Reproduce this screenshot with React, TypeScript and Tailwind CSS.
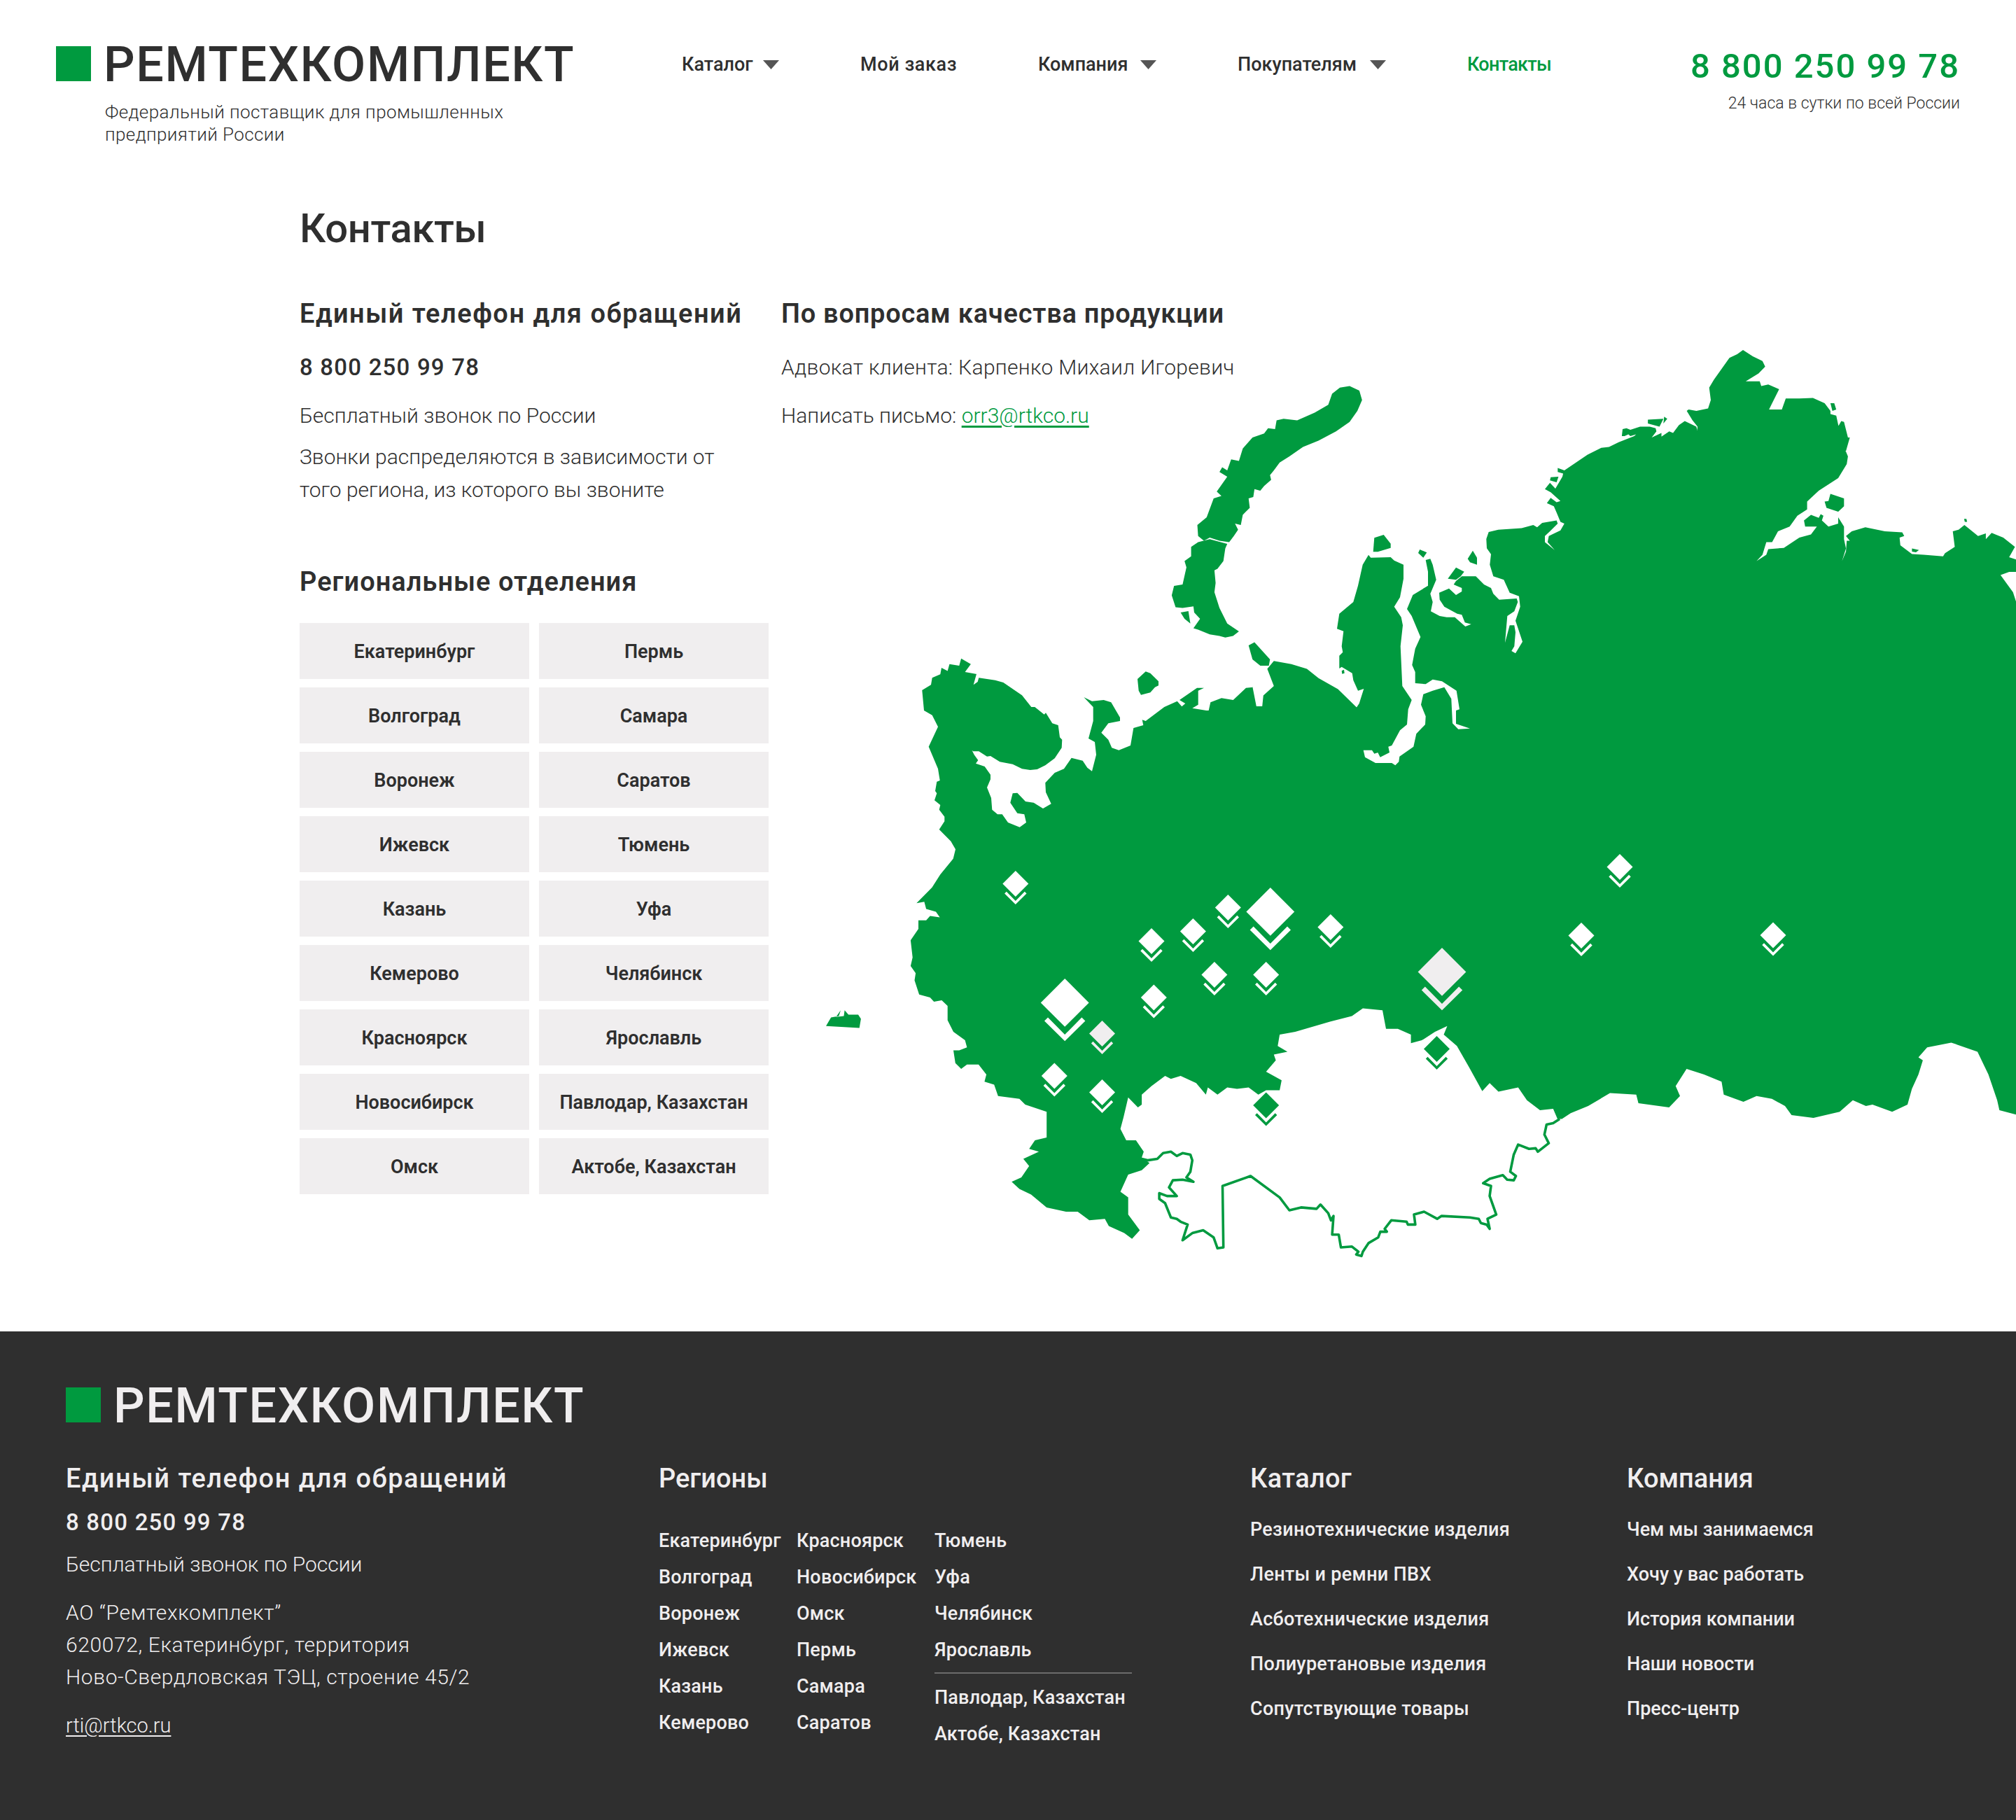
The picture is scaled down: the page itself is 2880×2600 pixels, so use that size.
const GREEN = "#009a3f"

// координаты контура снимались с разных кропов, каждый со своим масштабом
type Pt = [number, number]
const crop = (ox: number, oy: number, sx: number, sy: number) => (pts: number[]): Pt[] => {
  const out: Pt[] = []
  for (let i = 0; i < pts.length; i += 2) out.push([ox + pts[i] / sx, oy + pts[i + 1] / sy])
  return out
}
const z3 = crop(1140, 480, 1.802, 2.24)
const z4 = crop(2010, 480, 1.802, 2.24)
const z5 = crop(1140, 1180, 1.802, 2.45)
const z6 = crop(1900, 1180, 1.6, 2.45)
const z9 = crop(1900, 760, 3, 3)
const z10 = crop(1290, 950, 3, 3)

const line = (pts: Pt[]) => "M" + pts.map(([x, y]) => `${x.toFixed(1)} ${y.toFixed(1)}`).join("L")
const shape = (pts: Pt[]) => line(pts) + "Z"

const mainland = shape([
  ...z10([82,108, 120,85, 125,55, 160,40, 165,12]),
  ...z3([385,1072, 390,1050, 415,1055, 420,1032, 445,1050, 430,1075, 460,1082]),
  ...z10([315,38, 302,85, 320,72, 325,55, 395,65, 430,75, 510,130, 550,180, 565,180, 605,212, 612,205, 640,250, 665,258, 672,310, 682,320, 680,355, 650,400, 610,430, 575,447, 545,450, 510,445, 470,425, 415,415, 375,390, 360,392, 325,370, 300,370, 265,330, 245,325, 285,332, 290,355, 305,385, 322,408, 312,422, 350,435, 375,470, 375,490, 360,525, 378,570, 382,620, 405,640, 425,640, 450,675, 500,695, 528,675, 520,640, 490,635, 460,590, 470,550, 490,548, 525,585, 560,590, 600,615, 635,595, 612,545, 610,505, 650,462, 690,445, 722,398, 770,410, 790,440, 810,455, 828,385, 822,330, 795,315, 815,240, 815,180, 775,138, 810,155, 860,150, 892,160, 930,225, 930,240, 880,250, 850,290, 880,320, 895,355, 925,365, 975,345, 988,270, 1030,258, 1025,235, 1040,240, 1120,180, 1175,155, 1195,178, 1210,165, 1185,150, 1260,98, 1290,98, 1265,110, 1265,150, 1265,170, 1240,185, 1300,195, 1310,195, 1318,160, 1365,142, 1415,150, 1470,98, 1500,95]),
  ...z3([1170,1122, 1180,1185, 1195,1185, 1198,1150, 1225,1120, 1208,1065, 1225,1040, 1270,1050, 1310,1065, 1340,1095, 1390,1130, 1438,1188]),
  ...z9([125,735, 145,672, 120,680, 100,635, 95,605, 50,578, 40,585, 40,530, 55,515, 50,490, 58,425, 30,415, 40,350, 100,300, 120,230, 140,140, 165,98, 175,110, 260,108, 275,122, 315,140, 315,200, 300,280, 275,320, 305,365, 312,400, 302,490, 310,660, 350,720, 335,760, 330,825, 300,850, 265,915, 250,920, 255,945, 215,965, 205,945, 215,942, 190,950, 180,935, 143,935, 150,965, 195,990, 265,990, 280,1000, 295,985, 298,962, 358,920, 370,865, 408,825, 410,790, 390,740, 400,695, 440,680, 490,665, 520,715, 525,820, 550,845, 600,842, 540,822, 540,765, 555,760, 542,680, 480,640, 440,632, 410,652, 365,648, 365,600, 352,570, 365,500, 388,450, 350,360, 330,330, 355,270, 420,230, 420,170, 410,120, 430,115, 440,140, 455,205, 430,265, 440,300, 432,340, 470,360, 500,365, 535,365, 580,405, 605,395, 578,388, 565,355, 545,350, 490,320, 470,290, 468,260, 510,242, 540,270, 565,255, 565,240, 545,232, 530,225, 540,210, 565,190, 625,190, 660,225, 690,240, 700,265, 725,290, 800,285, 805,300, 790,340, 760,360, 750,475, 770,400, 790,400, 795,430, 790,490, 778,510, 795,520, 825,470, 795,380, 815,320, 810,275, 770,260, 745,205, 700,190, 685,140, 690,95, 672,70, 670,30, 680,0]),
  ...z4([235,620, 295,615, 325,605, 335,612, 348,598, 385,590, 388,600, 368,625, 355,640, 355,660, 380,685, 362,660, 365,640, 395,622, 405,600, 395,595, 385,565, 378,545, 360,535, 370,518, 385,532, 395,528, 370,500, 355,490, 368,470, 382,488, 400,450, 402,440, 388,435, 388,422, 405,430, 435,405, 465,380, 500,358, 520,355, 545,340, 585,320, 590,315, 575,320, 570,315, 560,320, 553,320, 555,298, 565,295, 575,300, 600,290, 625,290, 640,295, 642,305, 630,325, 655,310, 655,322, 675,305, 685,310, 700,285, 715,272, 745,290, 750,320, 738,338, 745,320, 748,290, 735,270, 720,240, 725,235, 745,240, 775,232, 782,205, 778,165, 790,140, 830,70, 850,58, 865,45, 890,65, 915,80, 922,98, 905,120, 872,145, 908,145, 912,160, 930,155, 958,170, 940,215, 932,235, 965,235, 975,200, 1010,200, 1045,198, 1075,215, 1090,240, 1090,250, 1105,255, 1112,295, 1105,300, 1118,272, 1125,275, 1135,325, 1140,325, 1130,368, 1118,365, 1115,370, 1100,330, 1130,370, 1135,385, 1132,410, 1110,455, 1085,475, 1060,495, 1030,530, 1030,555, 1005,575, 985,610, 955,625, 940,660, 925,660, 915,700, 900,720, 925,700, 930,682, 970,678, 1010,645, 1040,635, 1055,610, 1025,610, 1022,590, 1040,572, 1060,582, 1065,570, 1072,575, 1068,590, 1085,610, 1110,600, 1110,580, 1125,610, 1125,650, 1130,680, 1120,720, 1135,740, 1120,720, 1130,690, 1132,655, 1140,655, 1130,640, 1145,625, 1180,612, 1230,625, 1275,628, 1280,640, 1268,645, 1270,670, 1300,698, 1330,700, 1380,705, 1385,695, 1410,675, 1405,625, 1420,620, 1435,605, 1470,640, 1490,632, 1490,650, 1505,630, 1535,645, 1565,675, 1550,708, 1568,715, 1568,755, 1550,755, 1528,765, 1560,820, 1568,850, 1568,1568]),
  ...z6([1568,1010, 1530,995, 1525,960, 1505,870, 1480,790, 1420,758, 1365,775, 1345,810, 1355,820, 1345,870, 1330,920, 1320,975, 1285,1000, 1240,975, 1225,980, 1195,960, 1165,1000, 1105,1022, 1055,1012, 1040,980, 1010,955, 975,945, 945,965, 900,940, 895,895, 855,870, 815,850, 790,910, 800,945, 775,985, 705,970, 700,940, 640,935, 590,980, 550,1005, 530,1025, 520,1025, 510,990, 480,995, 450,960, 430,915, 385,930, 365,900, 348,928, 320,850, 290,770, 260,730, 268,700, 240,720, 210,750, 185,760, 185,730, 155,710, 128,710, 120,645, 75,638, 50,665, 0,685]),
  ...z5([1280,720, 1240,730, 1235,770, 1260,790, 1225,800, 1230,820, 1205,860, 1245,890, 1240,925, 1205,925, 1185,940, 1160,915, 1130,920, 1105,915, 1080,940, 1055,915, 1050,940, 1025,900, 985,875, 960,885, 945,875, 910,910, 885,940, 885,975, 875,985, 850,950, 838,1020, 830,1060, 845,1100, 870,1100, 890,1140, 885,1160, 905,1180, 885,1205, 850,1220, 830,1280, 850,1300, 850,1360, 880,1415, 860,1445, 840,1425, 800,1400, 790,1375, 750,1380, 720,1350, 690,1350, 640,1335, 600,1290, 570,1270, 550,1245, 575,1230, 595,1190, 580,1165, 620,1140, 595,1130, 610,1100, 640,1090, 640,1030, 640,1000, 585,975, 570,955, 515,945, 505,905, 480,895, 485,870, 465,835, 435,835, 420,850, 405,830, 400,785, 415,785, 435,775, 430,750, 400,720, 385,680, 385,630, 370,610, 350,615, 340,600, 312,590, 300,540, 303,515, 290,490, 295,460, 290,400, 310,360, 310,330, 330,330, 340,315, 365,320, 355,300, 330,290, 325,265, 305,270, 345,215]),
  ...z10([160,898, 215,830, 225,790, 205,755, 155,705, 178,670, 178,650, 155,620, 160,600, 135,580, 145,550, 138,540, 145,500, 158,495, 150,445, 110,350, 150,265, 125,215, 90,195]),
])

const islands = [
  z3([1420,160, 1445,175, 1452,205, 1440,240, 1420,275, 1385,305, 1340,335, 1300,355, 1265,385, 1240,405, 1225,430, 1215,445, 1218,460, 1200,480, 1190,495, 1175,490, 1172,515, 1160,520, 1163,550, 1145,572, 1140,605, 1125,600, 1133,620, 1122,640, 1110,660, 1085,655, 1060,645, 1045,655, 1030,640, 1028,605, 1052,580, 1070,520, 1090,512, 1078,498, 1105,450, 1085,435, 1092,420, 1105,430, 1115,395, 1135,400, 1145,360, 1170,325, 1200,312, 1210,295, 1228,298, 1232,270, 1250,265, 1285,270, 1330,245, 1365,220, 1375,185, 1395,165]),
  z3([1060,650, 1105,665, 1100,680, 1095,720, 1080,745, 1072,750, 1075,790, 1072,820, 1085,870, 1105,920, 1135,945, 1120,960, 1100,965, 1085,960, 1060,955, 1030,940, 1018,935, 1035,905, 1020,885, 1018,865, 990,870, 972,868, 962,830, 968,800, 990,795, 1000,740, 995,720, 1012,705, 1012,675, 1030,660]),
  z3([985,885, 1005,880, 1010,920, 995,905]),
  z3([1160,990, 1175,980, 1215,1035, 1212,1055, 1190,1055, 1170,1035]),
  z10([1005,60, 1040,28, 1060,35, 1095,70, 1095,88, 1080,95, 1060,118, 1020,128, 1010,110]),
  z9([185,85, 190,25, 230,12, 260,50, 260,68, 205,85]),
  z9([378,90, 385,75, 415,88, 400,110]),
  z9([590,115, 612,80, 630,110, 630,140, 600,130]),
  z9([505,200, 540,152, 575,170, 560,190, 540,205]),
  z9([50,595, 60,590, 62,605, 52,608]),
  z4([1090,505, 1125,520, 1125,545, 1110,562, 1080,550, 1075,530, 1085,528]),
  z4([1300,680, 1318,685, 1310,692, 1300,690]),
  z4([620,268, 660,265, 650,290, 620,280]),
  z4([662,258, 670,265, 660,280]),
  z4([1090,215, 1100,215, 1105,235, 1095,240]),
  z4([370,452, 390,450, 385,468, 368,462]),
  z4([1434,585, 1440,585, 1442,595, 1436,595]),
  z5([72,700, 85,670, 105,665, 110,645, 98,668, 118,665, 120,645, 130,660, 155,660, 162,675, 158,707]),
]

const border = line([
  ...z5([885,1165, 900,1170, 925,1165, 940,1145, 960,1140, 975,1155, 990,1145, 1010,1150, 1015,1170, 1010,1210, 1000,1230, 1018,1245, 990,1238, 965,1240, 955,1265, 975,1295, 950,1295, 930,1285, 930,1305, 945,1320, 960,1370, 975,1375, 985,1385, 1003,1395, 990,1450, 1015,1425, 1043,1415, 1070,1440, 1080,1478, 1095,1475, 1093,1260, 1165,1225, 1240,1300, 1265,1345, 1295,1335, 1335,1340, 1345,1325, 1365,1355, 1372,1380]),
  ...z6([8,1365, 5,1430, 20,1430, 25,1475, 50,1472, 65,1490, 60,1500, 72,1505, 75,1490, 88,1460, 110,1440, 115,1420, 130,1420, 125,1410, 140,1380, 175,1385, 178,1395, 195,1395, 192,1360, 215,1350, 245,1375, 255,1365, 320,1370, 340,1375, 345,1390, 358,1395, 365,1410, 360,1375, 380,1360, 365,1295, 368,1260, 350,1250, 365,1235, 395,1222, 405,1238, 420,1240, 425,1225, 412,1210, 420,1150, 430,1115, 455,1130, 470,1128, 475,1140, 500,1110, 490,1080, 495,1045, 510,1040, 525,1025]),
])

const markers: { x: number; y: number; big?: boolean; fill?: string }[] = [
  { x: 1450.8, y: 1244 },
  { x: 1645, y: 1326 },
  { x: 1704.4, y: 1312 },
  { x: 1754.3, y: 1278 },
  { x: 1814.8, y: 1268, big: true },
  { x: 1900.8, y: 1306 },
  { x: 1734.9, y: 1374 },
  { x: 1808.7, y: 1374 },
  { x: 1648.3, y: 1406.5 },
  { x: 1521.2, y: 1398, big: true },
  { x: 1574.5, y: 1458, fill: "#f0eeef" },
  { x: 1506.3, y: 1518.4 },
  { x: 1574.5, y: 1542 },
  { x: 1808.7, y: 1560.4, fill: GREEN },
  { x: 2314, y: 1220 },
  { x: 2259, y: 1318 },
  { x: 2533, y: 1317.5 },
  { x: 2060, y: 1354, big: true, fill: "#f0eeef" },
  { x: 2052.5, y: 1480, fill: GREEN },
]

function RussiaMap() {
  return (
    <svg
      className="absolute left-[1160px] top-[272px] h-[1340px] w-[1720px]"
      viewBox="1160 480 1720 1340"
      aria-hidden="true"
    >
      <path d={mainland} fill={GREEN} />
      {islands.map((pts, i) => (
        <path key={i} d={shape(pts)} fill={GREEN} />
      ))}
      <path d={border} fill="none" stroke={GREEN} strokeWidth="3.6" strokeLinejoin="round" />
      {markers.map((m, i) => (
        <g key={i} transform={`translate(${m.x} ${m.y}) scale(${m.big ? 1.86 : 1}) translate(-18.5 0)`} fill={m.fill ?? "#fff"}>
          <polygon points="18.5,0 37,18.5 18.5,37 0,18.5" />
          <polygon points="18.5,48 2.8,32.5 5.5,29.8 18.5,43 31.5,29.8 34.2,32.5" />
        </g>
      ))}
    </svg>
  )
}

function Arrow() {
  return (
    <svg className="h-[13px] w-[23px]" viewBox="0 0 23 13" aria-hidden="true">
      <polygon points="0,0 23,0 11.5,13" fill="#555555" />
    </svg>
  )
}

function Logo({ light }: { light?: boolean }) {
  return (
    <div className="flex h-[50px] items-center gap-[18px]">
      <div className="h-[50px] w-[50px] bg-[#009a3f]" />
      <div className={`pt-[2px] text-[70px] font-medium leading-none tracking-[1.6px] whitespace-nowrap ${light ? "text-[#f0eeef]" : "text-[#2f2f2f]"}`}>
        РЕМТЕХКОМПЛЕКТ
      </div>
    </div>
  )
}

function NavItem({ label, width, arrow, active, tracking = "" }: { label: string; width: string; arrow?: boolean; active?: boolean; tracking?: string }) {
  return (
    <a className={`flex items-center justify-between text-[27px] font-medium leading-8 whitespace-nowrap ${width} ${tracking} ${active ? "text-[#009a3f]" : "text-[#2f2f2f]"}`}>
      {label}
      {arrow && <Arrow />}
    </a>
  )
}

const offices = [
  "Екатеринбург", "Пермь", "Волгоград", "Самара", "Воронеж", "Саратов", "Ижевск", "Тюмень", "Казань", "Уфа",
  "Кемерово", "Челябинск", "Красноярск", "Ярославль", "Новосибирск", "Павлодар, Казахстан", "Омск", "Актобе, Казахстан",
]

const regionCols = [
  ["Екатеринбург", "Волгоград", "Воронеж", "Ижевск", "Казань", "Кемерово"],
  ["Красноярск", "Новосибирск", "Омск", "Пермь", "Самара", "Саратов"],
]

const catalog = ["Резинотехнические изделия", "Ленты и ремни ПВХ", "Асботехнические изделия", "Полиуретановые изделия", "Сопутствующие товары"]
const company = ["Чем мы занимаемся", "Хочу у вас работать", "История компании", "Наши новости", "Пресс-центр"]

function FooterLinks({ title, items, className }: { title: string; items: string[]; className: string }) {
  return (
    <div className={className}>
      <h3 className="text-[38px] font-medium leading-[50px]">{title}</h3>
      <ul className="mt-[16px] text-[27px] font-medium leading-[64px]">
        {items.map((t) => (
          <li key={t} className="whitespace-nowrap">{t}</li>
        ))}
      </ul>
    </div>
  )
}

export default function App() {
  return (
    <div className="w-full bg-white font-['Roboto',sans-serif] text-[#2f2f2f]">
      <header className="flex items-start pl-[80px] pr-[80px] pt-[66px]">
        <div className="w-[894px]">
          <Logo />
          <p className="mt-[28px] w-[680px] pl-[70px] text-[26px] font-[350] leading-8 tracking-[0.4px]">
            Федеральный поставщик для промышленных предприятий России
          </p>
        </div>
        <nav className="mt-[10px] flex gap-[116px]">
          <NavItem label="Каталог" width="w-[139px]" arrow />
          <NavItem label="Мой заказ" width="w-[138px]" tracking="tracking-[0.6px]" />
          <NavItem label="Компания" width="w-[169px]" arrow />
          <NavItem label="Покупателям" width="w-[212px]" arrow />
          <NavItem label="Контакты" width="w-[118px]" active tracking="tracking-[-0.7px]" />
        </nav>
        <div className="ml-auto pt-[2px] text-right">
          <div className="text-[49px] font-medium leading-[54px] tracking-[2px] text-[#009a3f]">8 800 250 99 78</div>
          <div className="mt-[11px] text-[23px] font-[350] leading-[30px]">24 часа в сутки по всей России</div>
        </div>
      </header>

      <main className="relative h-[1694px] overflow-hidden pl-[428px]">
        <RussiaMap />
        <div className="relative">
          <h1 className="pt-[82px] text-[58px] font-medium leading-[72px] tracking-[-0.4px]">Контакты</h1>
          <div className="mt-[61px] flex">
            <div className="w-[688px]">
              <h2 className="text-[38px] font-semibold leading-[50px] tracking-[1.5px] whitespace-nowrap">Единый телефон для обращений</h2>
              <div className="mt-[32px] text-[33px] font-medium leading-10 tracking-[1.2px]">8 800 250 99 78</div>
              <p className="mt-[29px] text-[30px] font-[350] leading-10">Бесплатный звонок по России</p>
              <p className="mt-[15px] w-[640px] text-[30px] font-[350] leading-[47px]">
                Звонки распределяются в зависимости от того региона, из которого вы звоните
              </p>
            </div>
            <div>
              <h2 className="text-[38px] font-semibold leading-[50px] tracking-[0.75px]">По вопросам качества продукции</h2>
              <p className="mt-[32px] text-[30px] font-[350] leading-10 tracking-[0.3px]">Адвокат клиента: Карпенко Михаил Игоревич</p>
              <p className="mt-[29px] text-[30px] font-[350] leading-10">
                Написать письмо: <a className="text-[#009a3f] underline underline-offset-4">orr3@rtkco.ru</a>
              </p>
            </div>
          </div>
          <h2 className="mt-[83px] text-[38px] font-semibold leading-[50px] tracking-[1px]">Региональные отделения</h2>
          <div className="mt-[34px] grid w-[670px] grid-cols-2 gap-x-[14px] gap-y-[12px]">
            {offices.map((city) => (
              <div key={city} className="flex h-[80px] items-center justify-center bg-[#f0eeef] pt-[3px] text-[27px] font-semibold whitespace-nowrap">
                {city}
              </div>
            ))}
          </div>
        </div>
      </main>

      <footer className="h-[698px] bg-[#2f2f2f] pl-[94px] pt-[80px] text-[#f0eeef]">
        <Logo light />
        <div className="mt-[55px] flex">
          <div className="w-[847px]">
            <h3 className="text-[38px] font-medium leading-[50px] tracking-[1.5px]">Единый телефон для обращений</h3>
            <div className="mt-[18px] text-[33px] font-medium leading-10 tracking-[1.2px]">8 800 250 99 78</div>
            <p className="mt-[20px] text-[30px] font-[350] leading-10">Бесплатный звонок по России</p>
            <p className="mt-[26px] w-[700px] text-[30px] font-[350] leading-[46px] tracking-[0.6px]">
              АО “Ремтехкомплект”
              <br />
              620072, Екатеринбург, территория
              <br />
              Ново-Свердловская ТЭЦ, строение 45/2
            </p>
            <a className="mt-[26px] block text-[29px] font-[350] leading-10 underline underline-offset-4">rti@rtkco.ru</a>
          </div>
          <div className="w-[845px]">
            <h3 className="text-[38px] font-medium leading-[50px]">Регионы</h3>
            <div className="mt-[38px] flex text-[27px] font-medium leading-[52px] tracking-[0.2px]">
              {regionCols.map((col, i) => (
                <ul key={i} className="w-[197px]">
                  {col.map((c) => (
                    <li key={c} className="whitespace-nowrap">{c}</li>
                  ))}
                </ul>
              ))}
              <ul className="w-[282px]">
                <li>Тюмень</li>
                <li>Уфа</li>
                <li>Челябинск</li>
                <li>Ярославль</li>
                <li className="mt-[6px] h-[2px] bg-[#6b6b6b]" />
                <li className="mt-[8px] whitespace-nowrap">Павлодар, Казахстан</li>
                <li className="whitespace-nowrap">Актобе, Казахстан</li>
              </ul>
            </div>
          </div>
          <FooterLinks title="Каталог" items={catalog} className="w-[538px] tracking-[0.3px]" />
          <FooterLinks title="Компания" items={company} className="" />
        </div>
      </footer>
    </div>
  )
}
